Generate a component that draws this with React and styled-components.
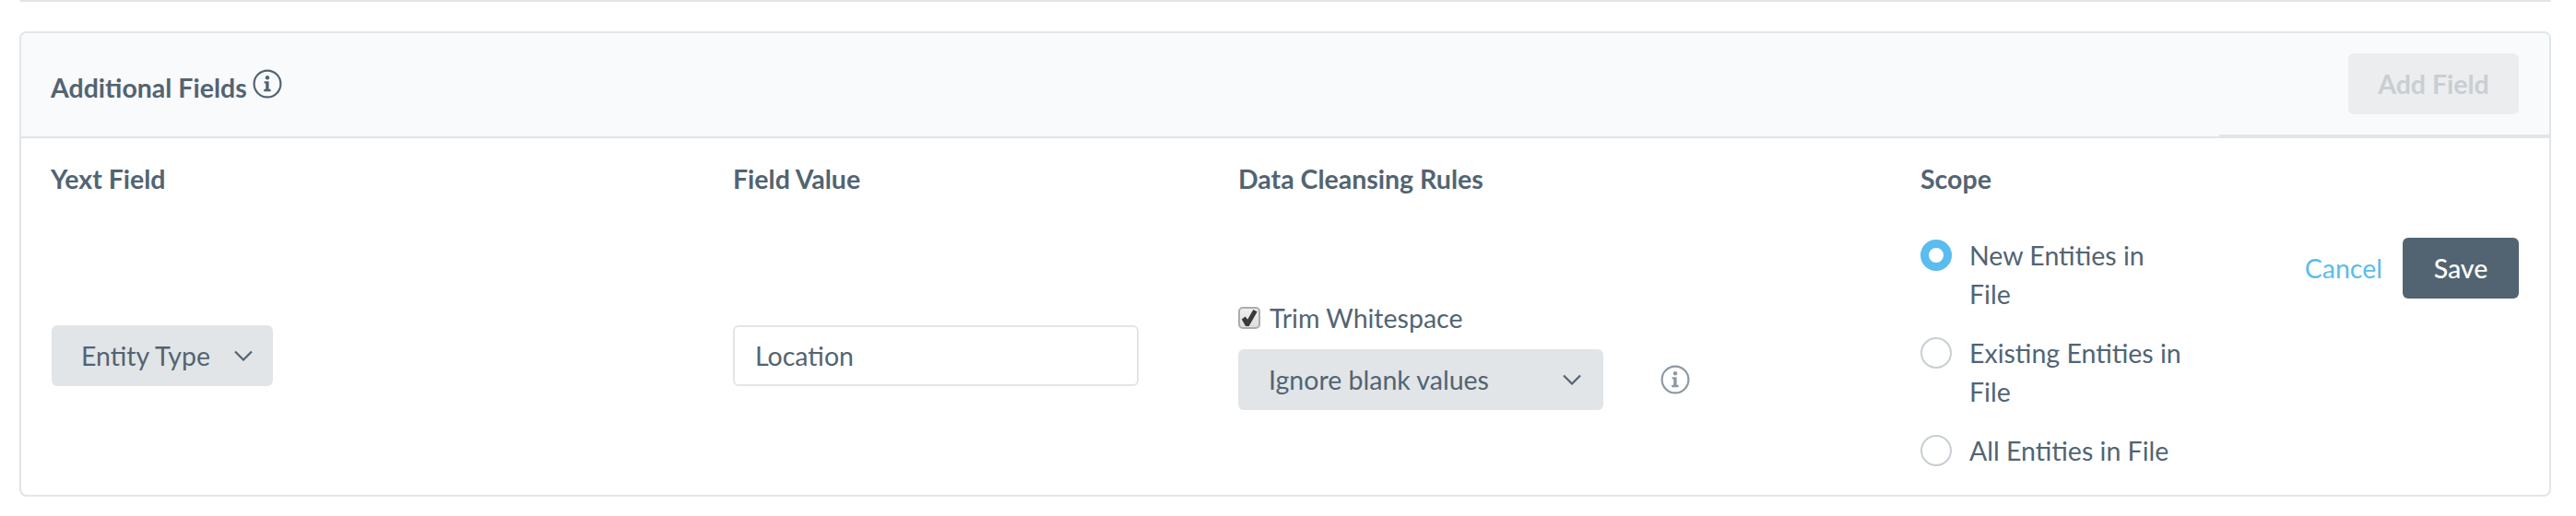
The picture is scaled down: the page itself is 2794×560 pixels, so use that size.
import styled, { createGlobalStyle } from "styled-components";

const GlobalStyle = createGlobalStyle`
    html, body {
        margin: 0;
        padding: 0;
        background: #fff;
    }
    body {
        font-family: Lato, "Open Sans", sans-serif;
        font-size: 28.5px;
        color: #526472;
    }
`

const InfoIcon = ({ color }) => (
    <svg width="32" height="32" viewBox="0 0 32 32" fill="none">
        <circle cx="16" cy="16" r="14.4" stroke={color} strokeWidth="2.2" />
        <circle cx="16" cy="9.2" r="2.2" fill={color} />
        <path d="M12.6 13.2h5v8.6h2v2.4h-7.4v-2.4h2v-6.2h-1.6z" fill={color} />
    </svg>
)

const Chevron = () => (
    <svg width="20" height="12" viewBox="0 0 20 12" fill="none">
        <path d="M1 1.5l9 9 9-9" stroke="#526472" strokeWidth="2.2" />
    </svg>
)

const App = () => {
    return (
        <>
            <GlobalStyle />
            <Page>
                <TopRule />
                <Card>
                    <Header>
                        <Title>
                            Additional Fields
                            <TitleIcon><InfoIcon color="#526472" /></TitleIcon>
                        </Title>
                        <HeaderActions>
                            <AddButton disabled>Add Field</AddButton>
                        </HeaderActions>
                    </Header>
                    <Body>
                        <ColumnLabel>Yext Field</ColumnLabel>
                        <ColumnLabel>Field Value</ColumnLabel>
                        <ColumnLabel>Data Cleansing Rules</ColumnLabel>
                        <ColumnLabel>Scope</ColumnLabel>
                        <span />

                        <Cell>
                            <EntitySelect>Entity Type<Chevron /></EntitySelect>
                        </Cell>
                        <Cell>
                            <ValueInput defaultValue="Location" />
                        </Cell>
                        <Cell>
                            <Rules>
                                <CheckLabel>
                                    <Check type="checkbox" defaultChecked />
                                    Trim Whitespace
                                </CheckLabel>
                                <RuleRow>
                                    <BlankSelect>Ignore blank values<Chevron /></BlankSelect>
                                    <RuleIcon><InfoIcon color="#8d99a3" /></RuleIcon>
                                </RuleRow>
                            </Rules>
                        </Cell>
                        <Cell>
                            <RadioGroup>
                                <RadioRow>
                                    <Radio selected />
                                    <RadioText>New Entities in File</RadioText>
                                </RadioRow>
                                <RadioRow>
                                    <Radio />
                                    <RadioText>Existing Entities in File</RadioText>
                                </RadioRow>
                                <RadioRow>
                                    <Radio />
                                    <RadioText>All Entities in File</RadioText>
                                </RadioRow>
                            </RadioGroup>
                        </Cell>
                        <Actions>
                            <CancelLink>Cancel</CancelLink>
                            <SaveButton>Save</SaveButton>
                        </Actions>
                    </Body>
                </Card>
            </Page>
        </>
    );
}

const Page = styled.div`
    width: 2794px;
    height: 560px;
    box-sizing: border-box;
    padding: 0 27px 0 21px;
    overflow: hidden;
`

const TopRule = styled.div`
    height: 2px;
    background: #e1e5e8;
    border-radius: 0 0 6px 6px;
    margin-bottom: 32px;
`

const Card = styled.section`
    box-sizing: border-box;
    height: 505px;
    border: 2px solid #e1e5e8;
    border-radius: 8px;
    overflow: hidden;
`

const Header = styled.header`
    display: flex;
    justify-content: space-between;
    align-items: flex-start;
    height: 114px;
    box-sizing: border-box;
    background: #f9fafb;
    border-bottom: 2px solid #e1e5e8;
`

const Title = styled.h2`
    display: flex;
    align-items: flex-start;
    margin: 43px 0 0 32px;
    font-size: 28.5px;
    font-weight: 700;
    line-height: 32px;
    color: #526472;
`

const TitleIcon = styled.span`
    display: block;
    margin: -4px 0 0 6px;
    height: 32px;
`

const HeaderActions = styled.div`
    display: flex;
    justify-content: flex-end;
    box-sizing: border-box;
    width: 358px;
    height: 112px;
    padding: 22px 33px 0 0;
    border-bottom: 2px solid #e1e5e8;
`

const AddButton = styled.button`
    box-sizing: border-box;
    width: 185px;
    height: 66px;
    border: 0;
    border-radius: 6px;
    font-family: inherit;
    font-size: 28.5px;
    font-weight: 700;
    background: #ecedef;
    color: #c9ced3;
`

const Body = styled.div`
    display: grid;
    grid-template-columns: 740px 548px 740px 410px 1fr;
    grid-template-rows: auto 1fr;
    height: 387px;
    box-sizing: border-box;
    padding: 0 33px 0 32px;
`

const ColumnLabel = styled.div`
    margin: 28px 0 27px;
    font-size: 28.5px;
    font-weight: 700;
    line-height: 32px;
    color: #526472;
`

const Cell = styled.div`
    display: flex;
    align-items: center;
`

const EntitySelect = styled.div`
    display: flex;
    align-items: center;
    justify-content: space-between;
    box-sizing: border-box;
    width: 240px;
    height: 66px;
    margin: -2px 0 0 1px;
    padding: 0 22px 0 32px;
    border-radius: 6px;
    background: #e1e5e8;
    font-size: 28.5px;
`

const ValueInput = styled.input`
    box-sizing: border-box;
    width: 440px;
    height: 66px;
    margin-top: -2px;
    padding: 0 22px;
    border: 2px solid #e1e5e8;
    border-radius: 6px;
    font-family: inherit;
    font-size: 28.5px;
    color: #526472;
    outline: none;
`

const Rules = styled.div`
    display: flex;
    flex-direction: column;
`

const CheckLabel = styled.label`
    display: flex;
    align-items: center;
    gap: 10px;
    height: 32px;
    margin-bottom: 18px;
    font-size: 28.5px;
`

const Check = styled.input`
    appearance: none;
    position: relative;
    box-sizing: border-box;
    width: 24px;
    height: 24px;
    margin: 0;
    border: 2px solid #acacac;
    border-radius: 5px;
    background: linear-gradient(#efefef, #dedede);

    &::after {
        content: "";
        position: absolute;
        inset: 1px;
        background: #3a3a3a;
        clip-path: polygon(4% 58%, 26% 42%, 40% 60%, 74% 0, 98% 12%, 48% 100%, 28% 100%);
    }
`

const RuleRow = styled.div`
    display: flex;
    align-items: center;
`

const BlankSelect = styled.div`
    display: flex;
    align-items: center;
    justify-content: space-between;
    box-sizing: border-box;
    width: 396px;
    height: 66px;
    padding: 0 24px 0 33px;
    border-radius: 6px;
    background: #e1e5e8;
    font-size: 28.5px;
`

const RuleIcon = styled.span`
    display: block;
    height: 32px;
    margin-left: 62px;
`

const RadioGroup = styled.div`
    display: flex;
    flex-direction: column;
    gap: 24px;
    margin-top: -6px;
`

const RadioRow = styled.label`
    display: flex;
    align-items: flex-start;
    gap: 19px;
`

const Radio = styled.span`
    flex: none;
    box-sizing: border-box;
    width: 34px;
    height: 34px;
    margin-top: 2px;
    border-radius: 50%;
    background: #fff;
    border: ${props => props.selected ? '9px solid #5bbcee' : '2px solid #c8ced3'};
`

const RadioText = styled.span`
    width: 232px;
    margin-top: -2px;
    font-size: 28.5px;
    line-height: 42px;
`

const Actions = styled.div`
    display: flex;
    align-items: flex-start;
    justify-content: flex-end;
    gap: 22px;
    padding-top: 21px;
`

const CancelLink = styled.a`
    font-size: 28.5px;
    line-height: 66px;
    color: #5bbcee;
    cursor: pointer;
`

const SaveButton = styled.button`
    box-sizing: border-box;
    width: 126px;
    height: 66px;
    border: 0;
    border-radius: 6px;
    font-family: inherit;
    font-size: 28.5px;
    font-weight: 500;
    background: #526472;
    color: #fff;
`

export default App
